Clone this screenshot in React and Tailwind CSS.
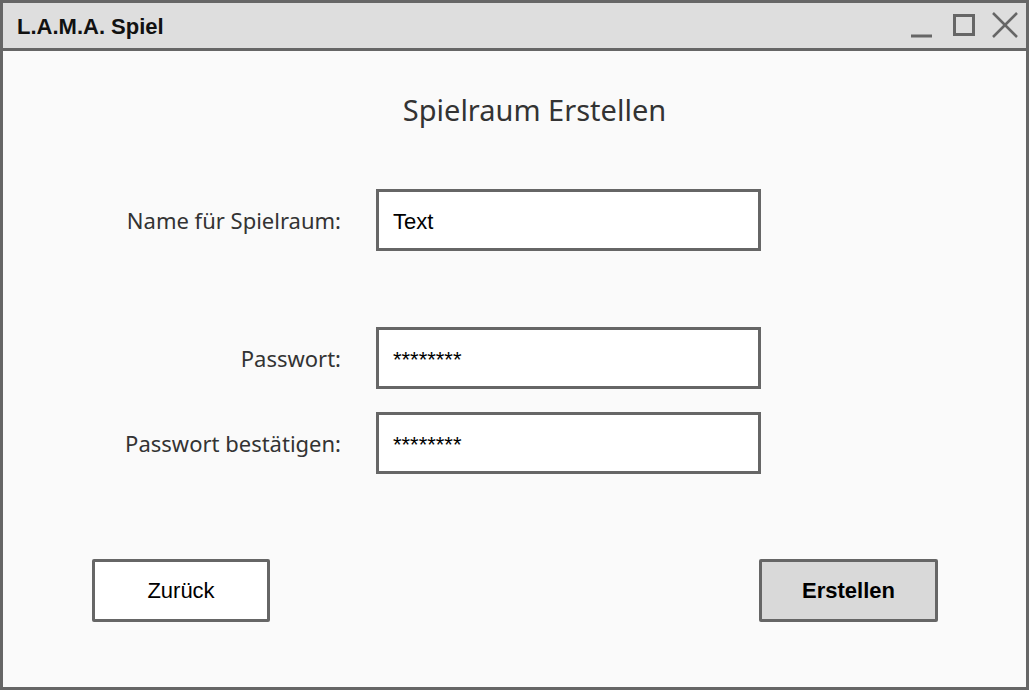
import React from "react";

/* -------------------- UI Components -------------------- */
function WindowControls() {
  return (
    <svg width="121" height="45" viewBox="0 0 121 45" className="shrink-0">
      <line x1="6" y1="33" x2="27" y2="33" stroke="#666" strokeWidth="3" />
      <rect x="49.5" y="12.5" width="19" height="19" fill="none" stroke="#666" strokeWidth="3" />
      <line x1="88" y1="10" x2="112" y2="34" stroke="#666" strokeWidth="2.5" />
      <line x1="112" y1="10" x2="88" y2="34" stroke="#666" strokeWidth="2.5" />
    </svg>
  );
}

function FieldRow({ label, value, className = "" }) {
  return (
    <div className={`flex items-center ${className}`}>
      <label className="w-[338px] text-right text-[22px] text-[#333] font-['Noto_Sans',sans-serif]">
        {label}
      </label>
      <div className="ml-[35px] flex h-[62px] w-[385px] items-center border-[3px] border-[#666] bg-white pl-[14px] pt-[3px] text-[22px] text-black font-['Liberation_Sans',Arial,sans-serif]">
        {value}
      </div>
    </div>
  );
}

/* -------------------- Main Page -------------------- */
export default function App() {
  return (
    <div className="flex h-[690px] w-[1029px] flex-col border-[3px] border-[#666] bg-[#fafafa]">
      {/* Title bar */}
      <div className="flex h-[48px] shrink-0 items-center justify-between border-b-[3px] border-[#666] bg-[#dedede]">
        <span className="pl-[14px] pt-[1px] text-[22px] font-bold text-[#111] font-['Liberation_Sans',Arial,sans-serif]">
          L.A.M.A. Spiel
        </span>
        <WindowControls />
      </div>

      {/* Content */}
      <div className="flex flex-1 flex-col">
        <h1 className="mt-[39px] h-[40px] pl-[40px] text-center text-[29px] leading-[40px] text-[#333] font-['Noto_Sans',sans-serif]">
          Spielraum Erstellen
        </h1>

        <FieldRow className="mt-[59px]" label="Name für Spielraum:" value="Text" />
        <FieldRow className="mt-[76px]" label="Passwort:" value="********" />
        <FieldRow className="mt-[23px]" label="Passwort bestätigen:" value="********" />

        {/* Buttons */}
        <div className="mt-[85px] flex justify-between pl-[89px] pr-[88px]">
          <button className="h-[63px] w-[178px] rounded-[2px] border-[3px] border-[#666] bg-white text-[22px] text-black font-['Liberation_Sans',Arial,sans-serif]">
            Zurück
          </button>
          <button className="h-[63px] w-[179px] rounded-[2px] border-[3px] border-[#666] bg-[#d9d9d9] text-[22px] font-bold text-black font-['Liberation_Sans',Arial,sans-serif]">
            Erstellen
          </button>
        </div>
      </div>
    </div>
  );
}
